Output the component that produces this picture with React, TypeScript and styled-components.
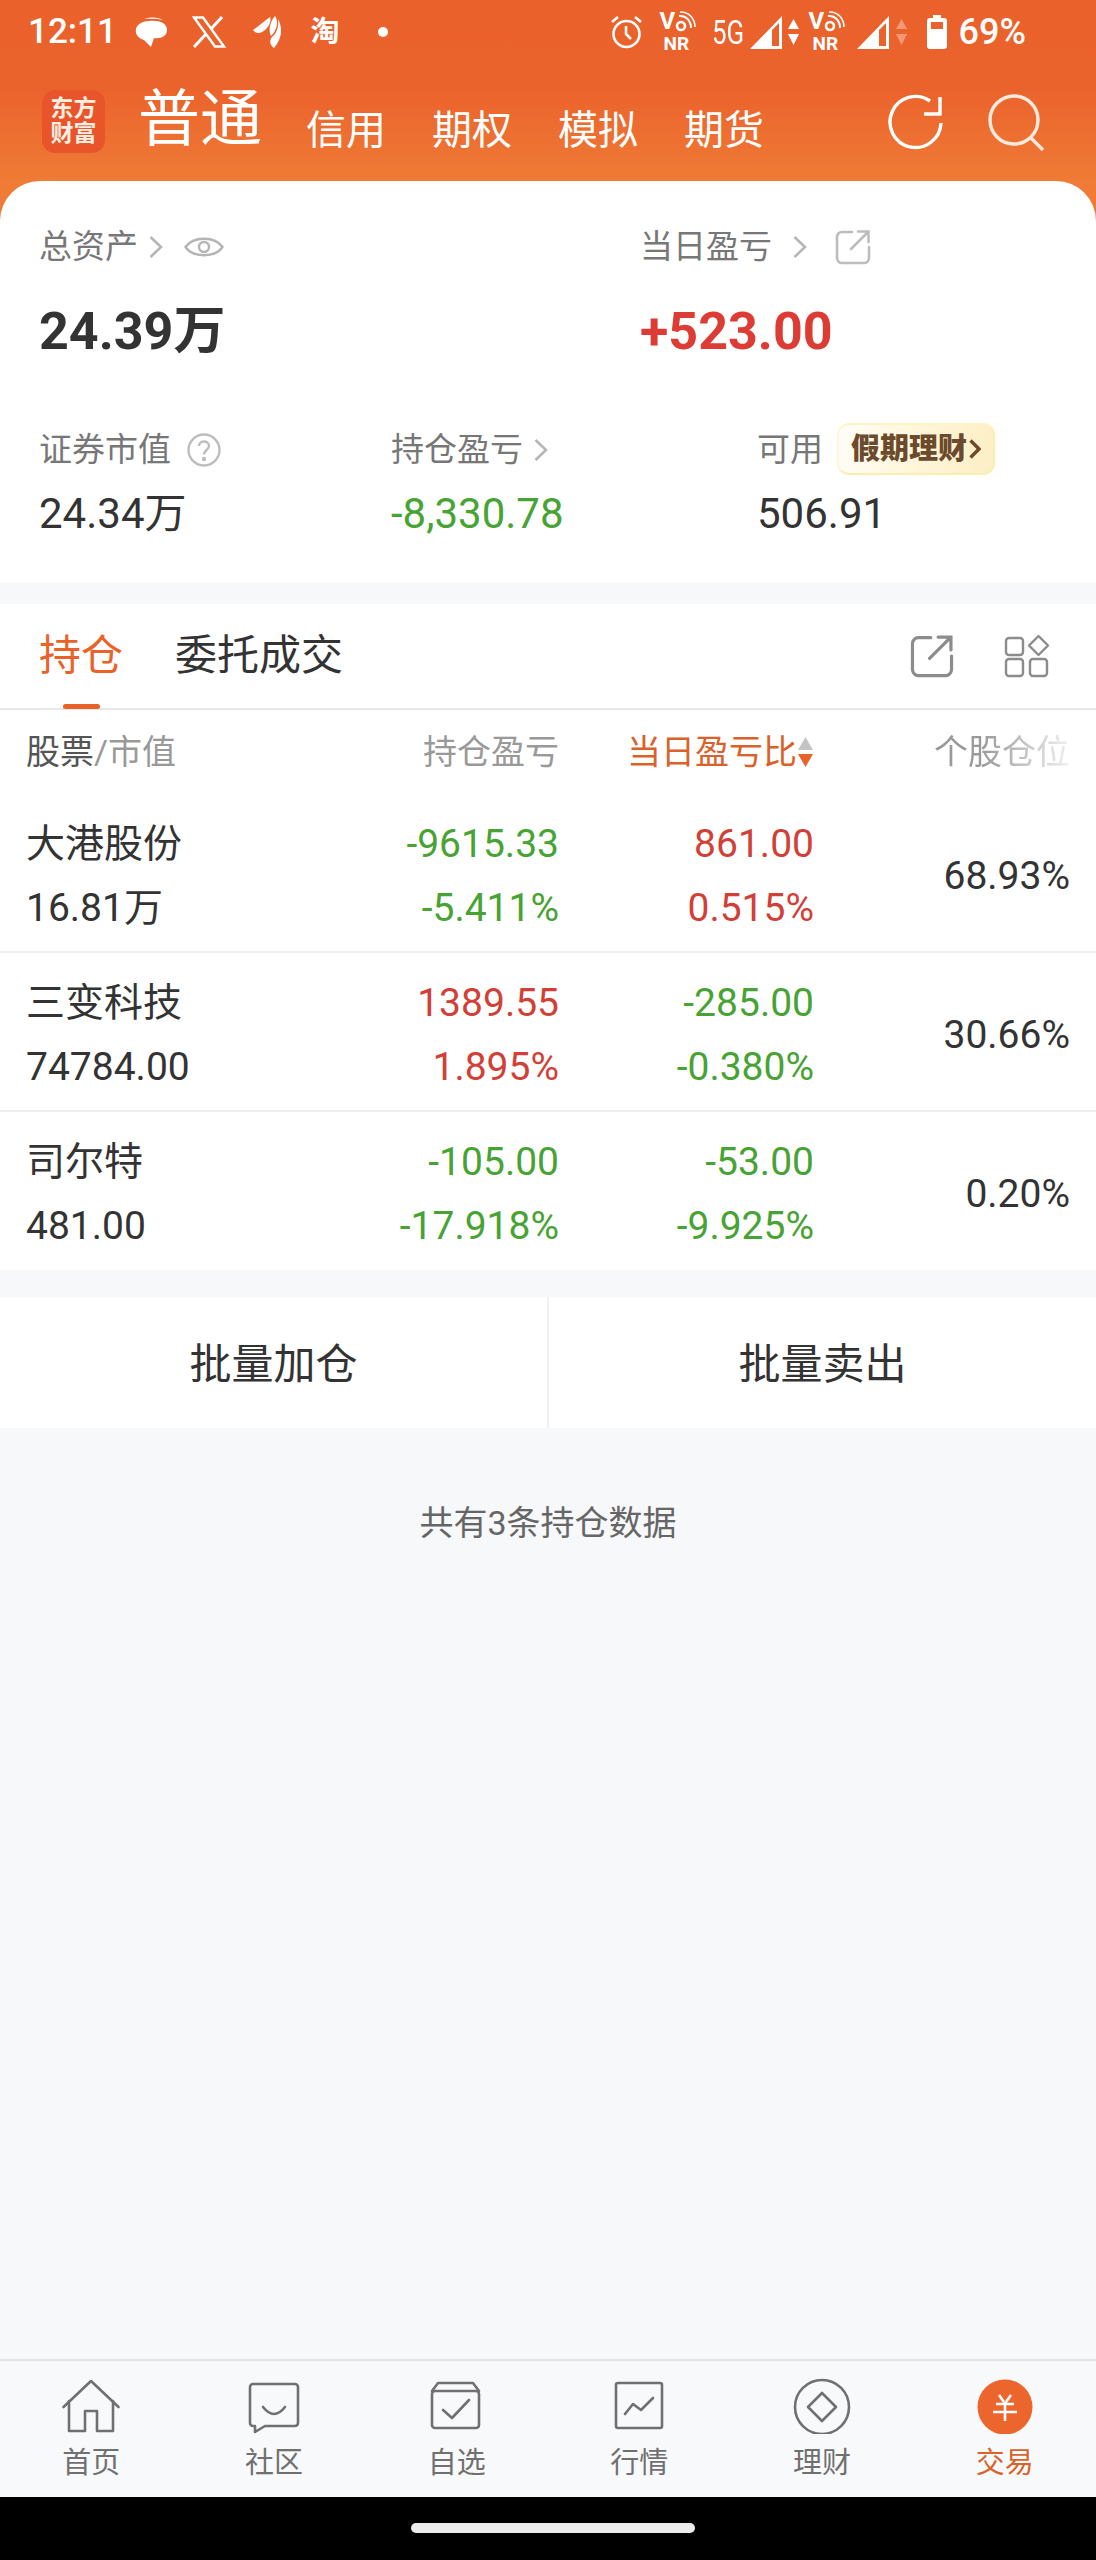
import styled, { createGlobalStyle } from "styled-components";

const GlobalStyle = createGlobalStyle`
  html, body {
    margin: 0;
    padding: 0;
    background: #f7f8fa;
  }
  * {
    box-sizing: border-box;
  }
`;

const green = "#47a333";
const red = "#d23f38";
const orange = "#e9622a";

const Page = styled.div`
  width: 1096px;
  height: 2560px;
  display: flex;
  flex-direction: column;
  overflow: hidden;
  background: #f7f8fa;
  font-family: Roboto, "Noto Sans CJK SC", sans-serif;
  color: #333;
`;

const Header = styled.header`
  height: 221px;
  flex: none;
  background: linear-gradient(180deg, #ea612b 0, #eb632c 90px, #ef7b36 181px);
  color: #fff;
`;

const StatusBar = styled.div`
  height: 64px;
  padding: 0 0 0 28px;
  display: flex;
  align-items: center;
`;

const Time = styled.span`
  font-size: 35px;
  font-weight: 500;
  width: 89px;
  line-height: 64px;
`;

const StatusIcon = styled.svg<{ $ml: number }>`
  flex: none;
  margin-left: ${(p) => p.$ml}px;
  display: block;
`;

const TaoGlyph = styled.span`
  width: 30px;
  margin-left: 28px;
  font-size: 29px;
  font-weight: 700;
  line-height: 30px;
  text-align: center;
`;

const StatusRight = styled.div`
  margin-left: auto;
  padding-right: 70px;
  display: flex;
  align-items: center;
`;

const VoBox = styled.div<{ $ml: number }>`
  width: 38px;
  height: 42px;
  margin-left: ${(p) => p.$ml}px;
  display: flex;
  flex-direction: column;
  align-items: flex-start;
  flex: none;
`;

const VoTop = styled.div`
  height: 23px;
  display: flex;
  font-size: 24px;
  line-height: 21px;
  font-weight: 700;
`;

const VoBottom = styled.div`
  font-size: 19px;
  line-height: 19px;
  font-weight: 700;
  padding-left: 4px;
`;

const FiveG = styled.span`
  width: 33px;
  margin-left: 14px;
  font-size: 34px;
  line-height: 36px;
  transform: scaleX(0.76);
  transform-origin: left center;
  white-space: nowrap;
`;

const Battery = styled.span`
  margin-left: 12px;
  font-size: 36px;
  font-weight: 500;
  line-height: 40px;
`;

const NavRow = styled.nav`
  height: 117px;
  padding: 26px 51px 0 42px;
  display: flex;
  align-items: flex-start;
`;

const Logo = styled.div`
  width: 63px;
  height: 63px;
  flex: none;
  border-radius: 13px;
  background: #e9552a;
  font-size: 23px;
  line-height: 25px;
  font-weight: 700;
  text-align: center;
  padding-top: 6px;
  color: #fdeee4;
`;

const ActiveTab = styled.span`
  margin-left: 33px;
  margin-top: -5px;
  font-size: 62px;
  line-height: 70px;
  width: 124px;
`;

const NavTab = styled.span`
  margin-left: 44px;
  margin-top: 12px;
  font-size: 40px;
  line-height: 58px;
  width: 82px;
`;

const NavIcons = styled.div`
  margin-left: auto;
  display: flex;
  gap: 45px;
  margin-top: 4px;
`;

const SummaryCard = styled.section`
  flex: none;
  margin-top: -40px;
  height: 402px;
  background: #fff;
  border-radius: 40px 40px 0 0;
  position: relative;
  padding: 46px 0 0 39px;
`;

const TopRow = styled.div`
  display: grid;
  grid-template-columns: 601px 1fr;
  height: 203px;
`;

const BottomRow = styled.div`
  display: grid;
  grid-template-columns: 352px 366px 1fr;
`;

const Label = styled.div`
  display: flex;
  align-items: center;
  height: 40px;
  font-size: 33px;
  line-height: 40px;
  color: #777;
  white-space: nowrap;
`;

const LabelIcon = styled.svg<{ $ml: number }>`
  margin-left: ${(p) => p.$ml}px;
  flex: none;
`;

const BigValue = styled.div<{ $color?: string }>`
  margin-top: 33px;
  font-size: 52px;
  line-height: 64px;
  font-weight: 700;
  color: ${(p) => p.$color ?? "#333"};
`;

const SmallValue = styled.div<{ $color?: string }>`
  margin-top: 17px;
  font-size: 42px;
  line-height: 54px;
  color: ${(p) => p.$color ?? "#333"};
`;

const HolidayBadge = styled.span`
  margin-left: 14px;
  width: 158px;
  height: 52px;
  margin-top: -2px;
  display: flex;
  align-items: center;
  justify-content: center;
  gap: 2px;
  border-radius: 12px;
  border: 2px solid #fbeeae;
  border-left-color: #fdf6da;
  border-top-color: #fdf3c3;
  background: linear-gradient(100deg, #fffdf8 0%, #fff7df 40%, #fdeec4 100%);
  color: #6c4a2c;
  font-size: 29px;
  font-weight: 900;
  line-height: 36px;
`;

const HoldingSection = styled.section`
  flex: none;
  margin-top: 21px;
  background: #fff;
`;

const TabsRow = styled.div`
  height: 106px;
  padding: 0 46px 0 39px;
  display: flex;
  align-items: center;
  border-bottom: 2px solid #e6e7ea;
  position: relative;
`;

const ListTab = styled.span<{ $active?: boolean }>`
  font-size: 42px;
  line-height: 56px;
  margin-right: 52px;
  margin-top: 0;
  color: ${(p) => (p.$active ? orange : "#333")};
`;

const Indicator = styled.span`
  position: absolute;
  left: 63px;
  bottom: -1px;
  width: 37px;
  height: 5px;
  border-radius: 3px;
  background: ${orange};
`;

const TabActions = styled.div`
  margin-left: auto;
  display: flex;
  gap: 50px;
`;

const GridRow = styled.div`
  padding-left: 26px;
  display: grid;
  grid-template-columns: 274px 259px 255px 256px;
`;

const HeadRow = styled(GridRow)`
  height: 84px;
  align-items: center;
  font-size: 34px;
  line-height: 44px;
  color: #999;
`;

const HeadCell = styled.div<{ $active?: boolean }>`
  text-align: right;
  display: flex;
  justify-content: flex-end;
  align-items: center;
  color: ${(p) => (p.$active ? "#d9622b" : "#999")};
  white-space: nowrap;
`;

const HeadFirst = styled.div`
  color: #999;
  white-space: nowrap;
  b {
    font-weight: 400;
    color: #555;
  }
`;

const FadedCell = styled(HeadCell)`
  -webkit-mask-image: linear-gradient(to right, #000 65%, rgba(0, 0, 0, 0.15) 100%);
  mask-image: linear-gradient(to right, #000 65%, rgba(0, 0, 0, 0.15) 100%);
`;

const SortArrows = styled.svg`
  flex: none;
`;

const StockRow = styled(GridRow)<{ $last?: boolean }>`
  height: ${(p) => (p.$last ? 158 : 159)}px;
  padding-top: 26px;
  border-bottom: ${(p) => (p.$last ? "none" : "2px solid #eeeff1")};
`;

const Cell = styled.div`
  display: flex;
  flex-direction: column;
  gap: 16px;
`;

const NumCell = styled(Cell)`
  align-items: flex-end;
`;

const StockName = styled.div`
  font-size: 39px;
  line-height: 48px;
  color: #333;
`;

const StockMeta = styled.div`
  font-size: 39px;
  line-height: 48px;
  color: #333;
`;

const Num = styled.div<{ $color: string }>`
  font-size: 39px;
  line-height: 48px;
  color: ${(p) => p.$color};
`;

const Weight = styled.div`
  font-size: 39px;
  line-height: 48px;
  text-align: right;
  align-self: flex-start;
  margin-top: 32px;
  color: #333;
`;

const BulkBar = styled.div`
  flex: none;
  margin-top: 27px;
  height: 131px;
  background: #fff;
  display: grid;
  grid-template-columns: 547px 1fr;
`;

const BulkButton = styled.button<{ $divider?: boolean }>`
  border: 0;
  border-left: ${(p) => (p.$divider ? "2px solid #eeeff1" : "0")};
  background: none;
  font: inherit;
  font-size: 42px;
  color: #333;
  padding: 0 0 4px;
`;

const Note = styled.div`
  flex: 1;
  padding-top: 73px;
  text-align: center;
  font-size: 34px;
  line-height: 44px;
  color: #666;
`;

const TabBar = styled.nav`
  flex: none;
  height: 138px;
  background: #f8f9fb;
  border-top: 2px solid #e3e4e8;
  display: grid;
  grid-template-columns: repeat(6, 1fr);
`;

const TabItem = styled.div<{ $active?: boolean }>`
  padding-top: 17px;
  display: flex;
  flex-direction: column;
  align-items: center;
  font-size: 29px;
  line-height: 36px;
  color: ${(p) => (p.$active ? "#d9622b" : "#707070")};
`;

const TabLabel = styled.span`
  margin-top: 11px;
`;

const GestureBar = styled.div`
  flex: none;
  height: 63px;
  background: #000;
  display: flex;
  padding: 26px 0 0 411px;
`;

const GestureHandle = styled.div`
  width: 284px;
  height: 10px;
  border-radius: 5px;
  background: #ececec;
`;

const Chevron = ({ ml }: { ml: number }) => (
  <LabelIcon $ml={ml} width="14" height="24" viewBox="0 0 14 24" fill="none" stroke="#b5b5b5" strokeWidth="2.5">
    <path d="M1.5 2 L12 12 L1.5 22" />
  </LabelIcon>
);

const ShareIcon = ({ size, color, ml = 0 }: { size: number; color: string; ml?: number }) => (
  <LabelIcon $ml={ml} width={size} height={size} viewBox="0 0 36 36" fill="none" stroke={color} strokeWidth="2.6" strokeLinecap="round">
    <path d="M17 3 H7 a5 5 0 0 0 -5 5 V29 a5 5 0 0 0 5 5 H29 a5 5 0 0 0 5 -5 V18" />
    <path d="M16 20 L33 3 M23 2.5 H33.5 V13" />
  </LabelIcon>
);

const VoNR = ({ ml }: { ml: number }) => (
  <VoBox $ml={ml}>
    <VoTop>
      V
      <svg width="22" height="22" viewBox="0 0 22 22" fill="none" stroke="#fff">
        <circle cx="6" cy="15" r="4" strokeWidth="2.6" />
        <path d="M4 5 C11 4 16 10 16 17" strokeWidth="2" />
        <path d="M5 1 C14 0.5 20 8 20 16" strokeWidth="1.6" />
      </svg>
    </VoTop>
    <VoBottom>NR</VoBottom>
  </VoBox>
);

const Signal = ({ ml }: { ml: number }) => (
  <StatusIcon $ml={ml} width="33" height="33" viewBox="0 0 33 33">
    <path d="M0 33 L32 0 V33 Z M22 14 V30 H29 V7 Z" fill="#fff" fillRule="evenodd" />
  </StatusIcon>
);

const DataArrows = ({ ml, faded }: { ml: number; faded?: boolean }) => (
  <StatusIcon $ml={ml} width="11" height="26" viewBox="0 0 11 26" fill="#fff" opacity={faded ? 0.35 : 1}>
    <path d="M5.5 0 L11 10 H0 Z M0 15 H11 L5.5 26 Z" />
  </StatusIcon>
);

const stroke = { fill: "none", stroke: "#707070", strokeWidth: 2.6, strokeLinejoin: "round", strokeLinecap: "round" } as const;

const tabs = [
  {
    label: "首页",
    icon: (
      <g {...stroke}>
        <path d="M2.5 29 L30 3 L57.5 29" />
        <path d="M8 23 V53 H24 V33 H36 V53 H52 V23" />
      </g>
    ),
  },
  {
    label: "社区",
    icon: (
      <g {...stroke}>
        <path d="M9 6 H51 a3 3 0 0 1 3 3 V45 a3 3 0 0 1 -3 3 H21 L11 54 V48 H9 a3 3 0 0 1 -3 -3 V9 a3 3 0 0 1 3 -3 Z" />
        <path d="M19 29 Q30 43 41 29" />
      </g>
    ),
  },
  {
    label: "自选",
    icon: (
      <g {...stroke}>
        <rect x="5" y="13" width="47" height="37" rx="3" />
        <path d="M5 13 L11 5 H46 L52 13" />
        <path d="M16 32 L25 40 L42 22" />
      </g>
    ),
  },
  {
    label: "行情",
    icon: (
      <g {...stroke}>
        <rect x="7" y="5" width="46" height="45" rx="2" />
        <path d="M16 36 L24 26 L32 32 L44 20" />
      </g>
    ),
  },
  {
    label: "理财",
    icon: (
      <g {...stroke}>
        <circle cx="30" cy="29" r="27" />
        <path d="M30 15 L44 29 L30 43 L16 29 Z" />
      </g>
    ),
  },
];

const stocks = [
  {
    name: "大港股份",
    meta: "16.81万",
    pos: [["-9615.33", green], ["-5.411%", green]],
    day: [["861.00", red], ["0.515%", red]],
    weight: "68.93%",
  },
  {
    name: "三变科技",
    meta: "74784.00",
    pos: [["1389.55", red], ["1.895%", red]],
    day: [["-285.00", green], ["-0.380%", green]],
    weight: "30.66%",
  },
  {
    name: "司尔特",
    meta: "481.00",
    pos: [["-105.00", green], ["-17.918%", green]],
    day: [["-53.00", green], ["-9.925%", green]],
    weight: "0.20%",
  },
];

export default function App() {
  return (
    <Page>
      <GlobalStyle />
      <Header>
        <StatusBar>
          <Time>12:11</Time>
          <StatusIcon $ml={18} width="32" height="32" viewBox="0 0 32 32" fill="#fff">
            <path d="M9 3 C14 0.5 24 1 28 4 C23 2.5 14 2.5 9 3 Z" />
            <path d="M14 5 C24 4 32 7 32 14 C32 20 26 23 19 22 L16 31 L9 24 C3 22 0 18 1 13 C2 8 8 5 14 5 Z" />
          </StatusIcon>
          <StatusIcon $ml={25} width="34" height="32" viewBox="0 0 34 32" fill="none" stroke="#fff" strokeWidth="2.4">
            <path d="M2 1.5 H11 L32 30.5 H23 Z" />
            <path d="M30 1 L19 13 M14 18 L2 31" strokeWidth="3" />
          </StatusIcon>
          <StatusIcon $ml={27} width="29" height="32" viewBox="0 0 29 32" fill="#fff">
            <path d="M0 14 C5 11 10 6 17 1 C19 5 15 13 9 16 C6 18 2 17 0 14 Z" />
            <path d="M22 0 C26 6 24 14 18 20 C15 14 17 6 22 0 Z" />
            <path d="M25 3 C30 12 29 23 21 32 C17 29 16 25 19 21 C24 17 26 10 25 3 Z" />
          </StatusIcon>
          <TaoGlyph>淘</TaoGlyph>
          <StatusIcon $ml={38} width="10" height="10" viewBox="0 0 10 10" fill="#fff">
            <circle cx="5" cy="5" r="5" />
          </StatusIcon>
          <StatusRight>
            <StatusIcon $ml={0} width="33" height="34" viewBox="0 0 33 34" fill="none" stroke="#fff" strokeWidth="2.6">
              <circle cx="16.5" cy="19" r="13" />
              <path d="M16 11 V19 L21 24 M2 7 L8 2 M31 7 L25 2" />
            </StatusIcon>
            <VoNR ml={17} />
            <FiveG>5G</FiveG>
            <Signal ml={5} />
            <DataArrows ml={5} />
            <VoNR ml={10} />
            <Signal ml={10} />
            <DataArrows ml={6} faded />
            <StatusIcon $ml={20} width="20" height="34" viewBox="0 0 20 34" fill="#fff">
              <path fillRule="evenodd" d="M6 0 H14 V3 H17 a3 3 0 0 1 3 3 V31 a3 3 0 0 1 -3 3 H3 a3 3 0 0 1 -3 -3 V6 a3 3 0 0 1 3 -3 H6 Z M4 7 V14 H16 V7 Z" />
            </StatusIcon>
            <Battery>69%</Battery>
          </StatusRight>
        </StatusBar>
        <NavRow>
          <Logo>
            东方
            <br />
            财富
          </Logo>
          <ActiveTab>普通</ActiveTab>
          <NavTab>信用</NavTab>
          <NavTab>期权</NavTab>
          <NavTab>模拟</NavTab>
          <NavTab>期货</NavTab>
          <NavIcons>
            <svg width="55" height="56" viewBox="0 0 55 56" fill="none" stroke="#fff" strokeWidth="3.4">
              <path d="M53 29 A25.5 25.5 0 1 1 42 7" />
              <path d="M52 3 V20 H36" />
            </svg>
            <svg width="57" height="57" viewBox="0 0 57 57" fill="none" stroke="#fdeadf" strokeWidth="3.4">
              <circle cx="26" cy="26" r="24" />
              <path d="M43 44 L55 56" />
            </svg>
          </NavIcons>
        </NavRow>
      </Header>

      <SummaryCard>
        <TopRow>
          <div>
            <Label>
              总资产
              <Chevron ml={11} />
              <LabelIcon $ml={21} width="40" height="28" viewBox="0 0 40 28" fill="none" stroke="#b5b5b5" strokeWidth="2.4">
                <path d="M1.5 14 C9 3 31 3 38.5 14 C31 25 9 25 1.5 14 Z" />
                <circle cx="20" cy="14" r="5" />
              </LabelIcon>
            </Label>
            <BigValue>24.39万</BigValue>
          </div>
          <div>
            <Label>
              当日盈亏
              <Chevron ml={21} />
              <ShareIcon size={36} color="#bdbdbd" ml={28} />
            </Label>
            <BigValue $color="#dc3c34">+523.00</BigValue>
          </div>
        </TopRow>
        <BottomRow>
          <div>
            <Label>
              证券市值
              <LabelIcon $ml={16} width="34" height="34" viewBox="0 0 34 34" fill="none" stroke="#bdbdbd" strokeWidth="2.4">
                <circle cx="17" cy="17" r="15.5" />
                <path d="M12 13 C12 7 22 7 22 13 C22 17 17 17 17 21.5" />
                <circle cx="17" cy="26" r="1" />
              </LabelIcon>
            </Label>
            <SmallValue>24.34万</SmallValue>
          </div>
          <div>
            <Label>
              持仓盈亏
              <Chevron ml={11} />
            </Label>
            <SmallValue $color={green}>-8,330.78</SmallValue>
          </div>
          <div>
            <Label>
              可用
              <HolidayBadge>
                假期理财
                <svg width="12" height="20" viewBox="0 0 12 20" fill="none" stroke="#6c4a2c" strokeWidth="3.4">
                  <path d="M1.5 1.5 L10 10 L1.5 18.5" />
                </svg>
              </HolidayBadge>
            </Label>
            <SmallValue>506.91</SmallValue>
          </div>
        </BottomRow>
      </SummaryCard>

      <HoldingSection>
        <TabsRow>
          <ListTab $active>持仓</ListTab>
          <ListTab>委托成交</ListTab>
          <Indicator />
          <TabActions>
            <ShareIcon size={44} color="#8c8c8c" />
            <svg width="46" height="44" viewBox="0 0 46 44" fill="none" stroke="#8c8c8c" strokeWidth="2.4">
              <rect x="2" y="4" width="17" height="17" rx="3" />
              <rect x="2" y="25" width="17" height="17" rx="3" />
              <rect x="26" y="25" width="17" height="17" rx="3" />
              <path d="M34.5 2 L44 11.5 L34.5 21 L25 11.5 Z" strokeLinejoin="round" />
            </svg>
          </TabActions>
        </TabsRow>
        <HeadRow>
          <HeadFirst>
            <b>股票</b>/市值
          </HeadFirst>
          <HeadCell>持仓盈亏</HeadCell>
          <HeadCell $active>
            当日盈亏比
            <SortArrows width="17" height="32" viewBox="0 0 17 32">
              <path d="M8.5 1 L16 14 H1 Z" fill="#c4c4c4" />
              <path d="M1 18 H16 L8.5 31 Z" fill="#e9622a" />
            </SortArrows>
          </HeadCell>
          <FadedCell>个股仓位</FadedCell>
        </HeadRow>
        {stocks.map((s, i) => (
          <StockRow key={s.name} $last={i === stocks.length - 1}>
            <Cell>
              <StockName>{s.name}</StockName>
              <StockMeta>{s.meta}</StockMeta>
            </Cell>
            <NumCell>
              {s.pos.map(([v, c]) => (
                <Num key={v} $color={c}>
                  {v}
                </Num>
              ))}
            </NumCell>
            <NumCell>
              {s.day.map(([v, c]) => (
                <Num key={v} $color={c}>
                  {v}
                </Num>
              ))}
            </NumCell>
            <Weight>{s.weight}</Weight>
          </StockRow>
        ))}
      </HoldingSection>

      <BulkBar>
        <BulkButton>批量加仓</BulkButton>
        <BulkButton $divider>批量卖出</BulkButton>
      </BulkBar>

      <Note>共有3条持仓数据</Note>

      <TabBar>
        {tabs.map((t) => (
          <TabItem key={t.label}>
            <svg width="60" height="56" viewBox="0 0 60 56">
              {t.icon}
            </svg>
            <TabLabel>{t.label}</TabLabel>
          </TabItem>
        ))}
        <TabItem $active>
          <svg width="60" height="56" viewBox="0 0 60 56">
            <circle cx="30" cy="29" r="27.5" fill="#ec652c" />
            <path d="M24 17 L29 24 M36 17 L31 24 M21 26 H39 M18 34 H42 M30 24 V43" fill="none" stroke="#fff" strokeWidth="2.6" />
          </svg>
          <TabLabel>交易</TabLabel>
        </TabItem>
      </TabBar>
      <GestureBar>
        <GestureHandle />
      </GestureBar>
    </Page>
  );
}
